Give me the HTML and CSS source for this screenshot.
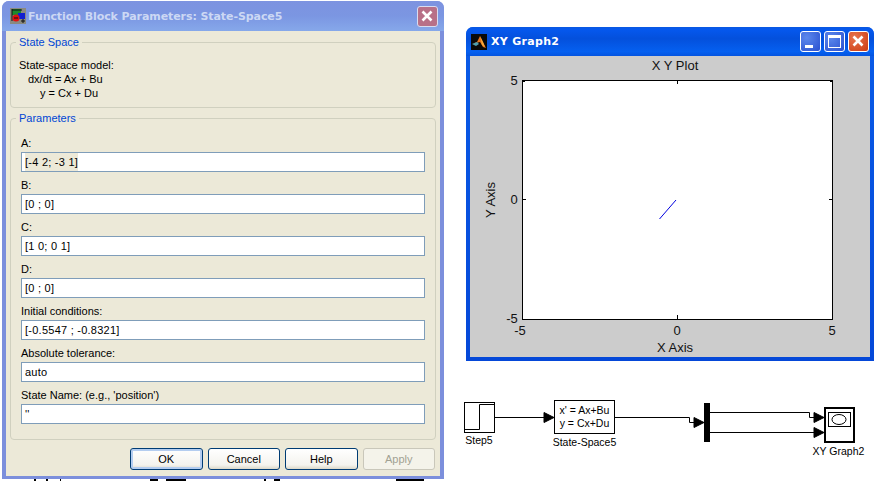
FILE: index.html
```html
<!DOCTYPE html>
<html lang="en">
<head>
  <meta charset="UTF-8" />
  <title>Function Block Parameters: State-Space5</title>
  <link rel="stylesheet" href="styles.css">
</head>
<body>
  <!-- parameters dialog -->
  <div class="win dialog">
    <div class="titlebar">
      <svg class="dlg-icon" width="16" height="16" viewBox="0 0 16 16">
        <rect width="16" height="16" fill="#8a8a80"/>
        <path d="M2 1h9v6H2z" fill="#1c8a2c"/>
        <path d="M2 1v12M2 2h10" stroke="#111" fill="none"/>
        <rect x="8" y="5" width="7" height="6" fill="#1020d0"/>
        <circle cx="6" cy="10" r="3.5" fill="#e01010"/>
        <path d="M4 10h4M13 11v4M11 13h4" stroke="#111" fill="none"/>
      </svg>
      <span class="title">Function Block Parameters: State-Space5</span>
      <div class="btn-close faded">
        <svg width="21" height="21" viewBox="0 0 21 21"><path d="M5.500 5.500l9 9M14.500 5.500l-9 9" stroke="#fff" stroke-width="2.600"/></svg>
      </div>
    </div>
    <div class="dlg-body">
      <fieldset class="group group-info">
        <legend>State Space</legend>
        <div class="info">
          <div>State-space model:</div>
          <div class="in1">dx/dt = Ax + Bu</div>
          <div class="in2">y = Cx + Du</div>
        </div>
      </fieldset>
      <fieldset class="group group-params">
        <legend>Parameters</legend>
        <div class="field">A:<div class="input"><span class="sel">[-4 2; -3 1]</span></div></div>
        <div class="field">B:<div class="input">[0 ; 0]</div></div>
        <div class="field">C:<div class="input">[1 0; 0 1]</div></div>
        <div class="field">D:<div class="input">[0 ; 0]</div></div>
        <div class="field">Initial conditions:<div class="input">[-0.5547 ; -0.8321]</div></div>
        <div class="field">Absolute tolerance:<div class="input">auto</div></div>
        <div class="field">State Name: (e.g., 'position')<div class="input">''</div></div>
      </fieldset>
      <div class="buttons">
        <button class="default">OK</button>
        <button>Cancel</button>
        <button>Help</button>
        <button disabled>Apply</button>
      </div>
    </div>
  </div>

  <!-- xy graph window -->
  <div class="win graph">
    <div class="titlebar">
      <svg class="ml-icon" width="16" height="16" viewBox="0 0 16 16">
        <rect width="16" height="16" fill="#0a0a0a"/>
        <path d="M1 10l5-2 3-6 6 12-3-1-3-5z" fill="#e8731c"/>
        <path d="M1 10l5-2 2 2-3 2z" fill="#4f9fb0"/>
        <path d="M9 2l3 6 2 5-3-2z" fill="#f4a83c"/>
      </svg>
      <span class="title">XY Graph2</span>
      <div class="caption-btns">
        <div class="btn-min"><i></i></div>
        <div class="btn-max"><i></i></div>
        <div class="btn-close">
          <svg width="21" height="21" viewBox="0 0 21 21"><path d="M5.500 5.500l9 9M14.500 5.500l-9 9" stroke="#fff" stroke-width="2.600"/></svg>
        </div>
      </div>
    </div>
    <svg class="plot" width="400" height="301" viewBox="470 56 400 301">
      <rect x="522.500" y="80.500" width="310" height="239" fill="#fff" stroke="#000"/>
      <path d="M522 81.500h3M830 81.500h3M677.500 81v3M522 199.500h4M829 199.500h3M677.500 319v-4" stroke="#000" fill="none"/>
      <path d="M676 200l-16.500 19" stroke="#0000e0" fill="none"/>
      <text x="675" y="70" class="lbl">X Y Plot</text>
      <text x="514" y="85" class="lbl">5</text>
      <text x="514" y="204" class="lbl">0</text>
      <text x="512" y="323" class="lbl">-5</text>
      <text x="520" y="335" class="lbl">-5</text>
      <text x="677" y="335" class="lbl">0</text>
      <text x="832" y="335" class="lbl">5</text>
      <text x="675" y="352" class="lbl">X Axis</text>
      <text x="495" y="200" class="lbl" transform="rotate(-90 495 200)">Y Axis</text>
    </svg>
  </div>

  <!-- simulink model, plus the tops of whatever sits under the dialog -->
  <svg class="model" width="877" height="91" viewBox="0 390 877 91">
    <path d="M34 479h2v2h-2zM46 479h2v2h-2zM60 479h1v2h-1zM150 479h8v2h-8zM166 479h20v2h-20zM264 479h2v2h-2zM274 479h6v2h-6zM396 479h28v2h-28z" fill="#000"/>
    <rect x="464.500" y="402.500" width="30" height="30" fill="#fff" stroke="#000"/>
    <path d="M465 429.500h14.500v-25h14.500" fill="none" stroke="#000"/>
    <path d="M495 417.500h49" stroke="#000"/>
    <path d="M554 417.500l-10-5v10z" stroke="#000"/>
    <rect x="554.500" y="400.500" width="60" height="33" fill="#fff" stroke="#000"/>
    <text x="584.500" y="414" class="blk">x' = Ax+Bu</text>
    <text x="584.500" y="427" class="blk">y = Cx+Du</text>
    <path d="M615 417.500h74.500v5h5" fill="none" stroke="#000"/>
    <path d="M704 422.500l-10-5v10z" stroke="#000"/>
    <rect x="704" y="403" width="6" height="39" fill="#000"/>
    <path d="M710 412.500h99.500v5h5" fill="none" stroke="#000"/>
    <path d="M710 432.500h104" fill="none" stroke="#000"/>
    <path d="M824 417.500l-10-5v10zM824 432.500l-10-5v10z" stroke="#000"/>
    <rect x="825" y="408" width="29" height="34" fill="#fff" stroke="#000" stroke-width="2"/>
    <rect x="828.500" y="412.500" width="22" height="14" fill="#fff" stroke="#000"/>
    <ellipse cx="839" cy="419.500" rx="7" ry="5" fill="#fff" stroke="#000"/>
    <text x="479" y="444" class="blk">Step5</text>
    <text x="584.500" y="446" class="blk">State-Space5</text>
    <text x="838.500" y="455" class="blk">XY Graph2</text>
  </svg>
</body>
</html>
```

FILE: styles.css
```css
* {
  box-sizing: border-box;
}

html, body {
  margin: 0;
  height: 481px;
  overflow: hidden;
  background: #fff;
}

body {
  position: relative;
  font-family: 'Liberation Sans', Arial, sans-serif;
  font-size: 11px;
}

.win {
  position: absolute;
  display: flex;
  flex-direction: column;
  border-radius: 7px 7px 0 0;
  overflow: hidden;
}

.dialog {
  left: 2px;
  top: 1px;
  width: 442px;
  height: 478px;
  background: #7c8fdc;
  padding: 0 4px 3px;
}

.graph {
  left: 466px;
  top: 27px;
  width: 408px;
  height: 334px;
  background: linear-gradient(#0a5ce8, #0548d8);
  padding: 0 4px 4px;
}

.titlebar {
  flex: none;
  height: 29px;
  display: flex;
  align-items: center;
  margin: 0 -4px;
  padding: 0 5px;
}

.dialog .titlebar {
  background: linear-gradient(#7d93e0 0, #7b96e2 50%, #86a8ea 100%);
  height: 30px;
}

.graph .titlebar {
  background: linear-gradient(#0a58e0 0, #0558ee 8%, #0450dc 40%, #0560f0 85%, #0454e0 100%);
}

.title {
  font-family: 'DejaVu Sans', sans-serif;
  font-weight: bold;
  font-size: 11px;
}

.dialog .title {
  color: #ccd8f4;
  margin-left: 2px;
  letter-spacing: -0.08px;
}

.graph .title {
  color: #fff;
  margin-left: 4px;
  letter-spacing: 0.3px;
}

.dlg-icon {
  margin-left: 3px;
}

.btn-close, .btn-min, .btn-max {
  width: 21px;
  height: 21px;
  border: 1px solid #fff;
  border-radius: 3px;
  position: relative;
}

.btn-close {
  background: radial-gradient(circle at 30% 30%, #e8744e, #cc3c12);
}

.btn-close svg {
  position: absolute;
  left: -1px;
  top: -1px;
}

.btn-close.faded {
  margin-left: auto;
  margin-right: 1px;
  background: #b87088;
  border-color: #d8dcf0;
}

.btn-min, .btn-max {
  background: radial-gradient(circle at 30% 30%, #5c88ec, #2a50d0);
}

.btn-min i {
  position: absolute;
  left: 4px;
  bottom: 3px;
  width: 8px;
  height: 3px;
  background: #fff;
}

.btn-max i {
  position: absolute;
  left: 3px;
  top: 3px;
  width: 13px;
  height: 13px;
  border: 1px solid #fff;
  border-top-width: 3px;
}

.caption-btns {
  margin-left: auto;
  display: flex;
  gap: 3px;
}

.dlg-body {
  flex: 1;
  background: #ece9d8;
  padding: 5px 4px 0;
  display: flex;
  flex-direction: column;
  color: #000;
}

.group {
  margin: 0;
  border: 1px solid #d0d0bf;
  border-radius: 4px;
  padding: 0;
}

.group legend {
  color: #0046d5;
  margin-left: 5px;
  padding: 0 3px;
  font-size: 11px;
  line-height: 13px;
}

.group-info {
  height: 72px;
}

.info {
  padding: 9px 8px 0;
  line-height: 14px;
}

.in1 {
  padding-left: 9px;
}

.in2 {
  padding-left: 21px;
}

.group-params {
  margin-top: 4px;
  height: 328px;
  padding: 9px 10px 0;
  display: flex;
  flex-direction: column;
}

.group-params legend {
  margin-left: -5px;
}

.field {
  flex: none;
  display: flex;
  flex-direction: column;
  height: 42px;
  line-height: 14px;
  padding-top: 2px;
  gap: 2px;
}

.input {
  width: 404px;
  height: 20px;
  border: 1px solid #7f9db9;
  padding: 0 3px;
  line-height: 18px;
  letter-spacing: 0.25px;
  color: #000;
  background: #fff;
}

.sel {
  display: inline-block;
  background: #ece9d8;
}

.buttons {
  display: flex;
  justify-content: flex-end;
  gap: 5px;
  margin-top: 8px;
  padding-right: 1px;
}

.buttons button {
  width: 72.500px;
  height: 22px;
  border: 1px solid #003c74;
  border-radius: 3px;
  background: linear-gradient(#fff, #f4f3ee 80%, #dcd8c8);
  font: 11px 'Liberation Sans', Arial, sans-serif;
  color: #000;
  padding: 0;
}

.buttons .default {
  box-shadow: inset 0 0 0 2px #b4cdf0;
}

.buttons button:disabled {
  border-color: #c9c7ba;
  background: #f4f3ea;
  color: #a1a192;
}

.plot {
  display: block;
  flex: none;
  background: #ccc;
}

.lbl {
  font-family: 'Liberation Sans', Arial, sans-serif;
  font-size: 13px;
  text-anchor: middle;
  fill: #111;
}

.model {
  position: absolute;
  left: 0;
  top: 390px;
}

.blk {
  font-family: 'Liberation Sans', Arial, sans-serif;
  font-size: 10.500px;
  text-anchor: middle;
  fill: #000;
}
```
